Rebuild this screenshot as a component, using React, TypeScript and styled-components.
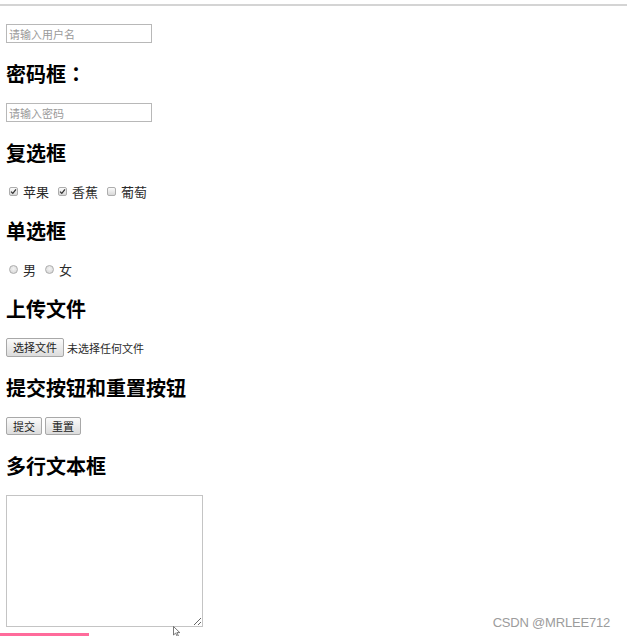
import React from "react";
import styled, { createGlobalStyle } from "styled-components";

const Global = createGlobalStyle`
  html, body { margin: 0; padding: 0; background: #fff; }
  body { font-family: "Noto Sans CJK SC", "Liberation Sans", sans-serif; color: #222; }
`;

const Shell = styled.div`
  position: relative;
  width: 627px;
  height: 636px;
  overflow: hidden;
  background: #fff;
`;

const TopRule = styled.div`
  margin-top: 4px;
  height: 2px;
  background: #d4d4d4;
`;

const Content = styled.form`
  display: flex;
  flex-direction: column;
  align-items: flex-start;
  padding: 18px 6px 0;
`;

const Heading = styled.h2`
  margin: 19px 0 17px;
  font-size: 20px;
  line-height: 24px;
  font-weight: 700;
  color: #000;
`;

const Colon = styled.span`
  font-family: "Noto Sans CJK TC", "Noto Sans CJK SC", sans-serif;
`;

const TextInput = styled.input`
  box-sizing: border-box;
  width: 146px;
  height: 19px;
  margin: 0;
  padding: 0 2px;
  border: 1px solid #b8b8b8;
  font-family: "Noto Sans CJK SC", sans-serif;
  font-size: 11px;
  color: #222;
  outline: none;
  &::placeholder { color: #9a9a9a; }
`;

const Row = styled.div`
  display: flex;
  align-items: center;
  height: 18px;
  padding-left: 3px;
  font-size: 13px;
  color: #2a2a2a;
`;

const Option = styled.label`
  display: inline-flex;
  align-items: center;
  gap: 5px;
  margin-right: 9px;
`;

const CheckMark = styled.span<{ $round?: boolean }>`
  box-sizing: border-box;
  display: inline-flex;
  align-items: center;
  justify-content: center;
  width: 9px;
  height: 9px;
  border: 1px solid #adadad;
  border-radius: ${(p) => (p.$round ? "50%" : "2px")};
  background: ${(p) =>
    p.$round
      ? "radial-gradient(circle at 50% 40%, #f4f4f4 0%, #d2d2d2 100%)"
      : "linear-gradient(#fbfbfb, #d8d8d8)"};
`;

const FileRow = styled.div`
  display: flex;
  align-items: center;
  gap: 3px;
  font-size: 11px;
  color: #2a2a2a;
`;

const ButtonRow = styled.div`
  display: flex;
  gap: 3px;
`;

const Button = styled.button<{ $tall?: boolean }>`
  box-sizing: border-box;
  height: ${(p) => (p.$tall ? "19px" : "18px")};
  margin: 0;
  padding: 0 6px;
  border: 1px solid #a8a8a8;
  border-radius: 2px;
  background: linear-gradient(#fbfbfb, #dcdcdc);
  font-family: "Noto Sans CJK SC", sans-serif;
  font-size: 11px;
  line-height: 1;
  color: #222;
`;

const TextArea = styled.textarea`
  box-sizing: border-box;
  width: 197px;
  height: 132px;
  margin: 0;
  border: 1px solid #c4c4c4;
  outline: none;
  resize: both;
`;

const Watermark = styled.div`
  position: absolute;
  right: 17px;
  bottom: 6px;
  font-family: "Liberation Sans", Arial, sans-serif;
  font-size: 13px;
  line-height: 15px;
  letter-spacing: -0.2px;
  color: #9c9c9c;
`;

const PinkBar = styled.div`
  position: absolute;
  left: 0;
  bottom: 0;
  width: 89px;
  height: 3px;
  background: #ff6b9b;
`;

const Cursor = styled.svg`
  position: absolute;
  left: 173px;
  top: 626px;
`;

const Check = () => (
  <svg width="7" height="7" viewBox="0 0 7 7">
    <path d="M1 3.6 L2.8 5.4 L6 1.4" fill="none" stroke="#333" strokeWidth="1.3" />
  </svg>
);

const CheckOption = ({ label, checked }: { label: string; checked?: boolean }) => (
  <Option>
    <CheckMark>{checked && <Check />}</CheckMark>
    {label}
  </Option>
);

const RadioOption = ({ label }: { label: string }) => (
  <Option>
    <CheckMark $round />
    {label}
  </Option>
);

export default function App() {
  return (
    <Shell>
      <Global />
      <TopRule />
      <Content onSubmit={(e) => e.preventDefault()}>
        <TextInput type="text" placeholder="请输入用户名" />
        <Heading>
          密码框<Colon>：</Colon>
        </Heading>
        <TextInput type="password" placeholder="请输入密码" />
        <Heading>复选框</Heading>
        <Row>
          <CheckOption label="苹果" checked />
          <CheckOption label="香蕉" checked />
          <CheckOption label="葡萄" />
        </Row>
        <Heading>单选框</Heading>
        <Row>
          <RadioOption label="男" />
          <RadioOption label="女" />
        </Row>
        <Heading>上传文件</Heading>
        <FileRow>
          <Button type="button" $tall>选择文件</Button>
          <span>未选择任何文件</span>
        </FileRow>
        <Heading>提交按钮和重置按钮</Heading>
        <ButtonRow>
          <Button type="submit">提交</Button>
          <Button type="reset">重置</Button>
        </ButtonRow>
        <Heading>多行文本框</Heading>
        <TextArea />
      </Content>
      <Watermark>CSDN @MRLEE712</Watermark>
      <PinkBar />
      <Cursor width="8" height="11" viewBox="0 0 8 11">
        <path d="M0.5 0.5 L0.5 9 L2.6 7.1 L4.2 10.4 L5.4 9.8 L3.9 6.6 L6.8 6.6 Z" fill="#fff" stroke="#555" strokeWidth="0.8" />
      </Cursor>
    </Shell>
  );
}
